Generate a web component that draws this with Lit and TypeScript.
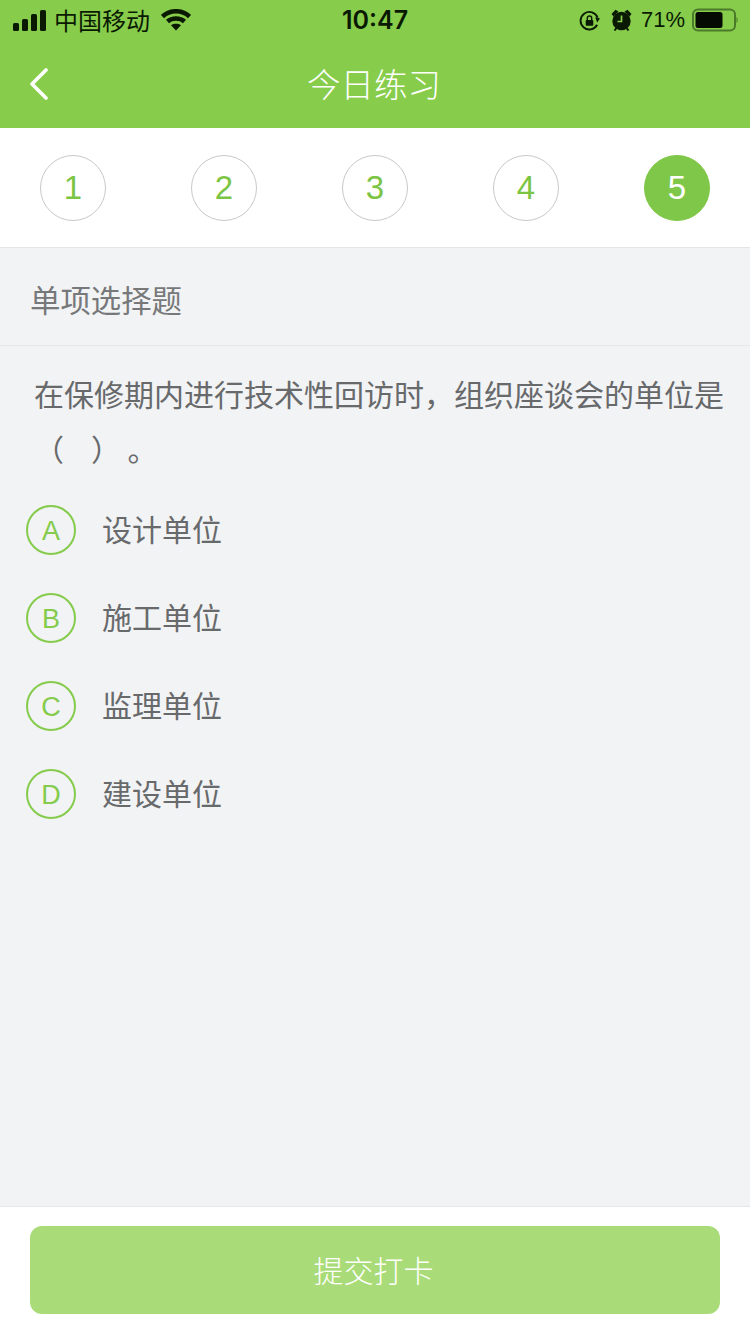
import { LitElement, html, css } from "lit";
import { customElement } from "lit/decorators.js";

@customElement("app-root")
export class AppRoot extends LitElement {
  static styles = css`
    :host {
      display: flex;
      flex-direction: column;
      width: 750px;
      height: 1334px;
      background: #f2f3f5;
      font-family: "Noto Sans CJK SC", "Liberation Sans", sans-serif;
      overflow: hidden;
    }
    .top { background: #87cd4b; height: 128px; display: flex; flex-direction: column; flex: none; }
    .status { height: 40px; display: flex; align-items: center; justify-content: space-between; padding: 0 12px 0 13px; color: #0a1a02; font-family: "Liberation Sans", "Noto Sans CJK SC", sans-serif; position: relative; }
    .left, .right { display: flex; align-items: center; }
    .left { gap: 8px; }
    .carrier { font-family: "Noto Sans CJK SC", sans-serif; font-size: 24px; line-height: 40px; margin-left: -1px; }
    .time { position: absolute; left: 0; right: 0; text-align: center; font-size: 25px; line-height: 40px; font-family: "Inter", "Liberation Sans", sans-serif; font-weight: 600; }
    .pct { font-size: 22px; margin: 0 7px 0 9px; line-height: 40px; }
    .nav { flex: 1; display: flex; align-items: center; justify-content: center; position: relative; color: #fff; font-size: 33.5px; font-weight: 300; padding: 0 2px 4px 0; }
    .back { position: absolute; left: 29px; top: 28px; }
    .steps { background: #fff; height: 119px; border-bottom: 1px solid #e4e5e7; display: flex; align-items: center; justify-content: space-between; padding: 0 40px; flex: none; }
    .step { box-sizing: border-box; width: 66px; height: 66px; border-radius: 50%; border: 1px solid #c9c9c9; color: #7cc544; font-size: 33px; display: flex; align-items: center; justify-content: center; font-family: "Liberation Sans", sans-serif; }
    .step.on { background: #7fc748; border-color: #7fc748; color: #fff; }
    .type { height: 98px; box-sizing: border-box; border-bottom: 1px solid #e6e7e9; padding: 4px 0 0 30px; display: flex; align-items: center; font-size: 30.4px; color: #77787a; flex: none; }
    .main { flex: 1; }
    .q { margin: 0; padding: 20px 20px 0 34px; font-size: 30px; line-height: 55px; color: #67696b; white-space: nowrap; }
    .opts { display: flex; flex-direction: column; padding: 29px 0 0 26px; gap: 38px; }
    .opt { display: flex; align-items: center; gap: 26px; height: 50px; font-size: 30px; color: #67696b; }
    .opt-text { padding-bottom: 5px; }
    .mark { box-sizing: border-box; width: 50px; height: 50px; border-radius: 50%; border: 2px solid #85cb4c; color: #85cb4c; display: flex; align-items: center; justify-content: center; font-size: 27px; padding-top: 2px; font-family: "Liberation Sans", sans-serif; flex: none; }
    .foot { flex: none; height: 128px; box-sizing: border-box; background: #fff; border-top: 1px solid #e6e7e9; padding: 19px 30px 0; }
    .btn { height: 88px; border-radius: 12px; background: #a9dc78; color: #fff; font-size: 30px; font-weight: 300; display: flex; align-items: center; justify-content: center; padding: 0 3px 2px 0; box-sizing: border-box; }
  `;

  render() {
    const steps = [1, 2, 3, 4, 5];
    const opts: [string, string][] = [
      ["A", "设计单位"],
      ["B", "施工单位"],
      ["C", "监理单位"],
      ["D", "建设单位"],
    ];
    return html`
      <div class="top">
        <div class="status">
          <div class="left">
            <svg width="34" height="21" viewBox="0 0 34 21" fill="#0a1a02">
              <rect x="0" y="13" width="6" height="8" rx="1.5"/>
              <rect x="9" y="9" width="6" height="12" rx="1.5"/>
              <rect x="18" y="4" width="6" height="17" rx="1.5"/>
              <rect x="27" y="0" width="6" height="21" rx="1.5"/>
            </svg>
            <span class="carrier">中国移动</span>
            <svg width="30" height="22" viewBox="0 0 30 22" fill="none" stroke="#0a1a02" stroke-width="4.6" style="margin-left:3px">
              <path d="M1.5 7.5 C9 0.5 21 0.5 28.5 7.5"/>
              <path d="M6.5 12.5 C11 8.5 19 8.5 23.5 12.5"/>
              <path d="M15 21.5 L10 16.2 C13 14.3 17 14.3 20 16.2 Z" fill="#0a1a02" stroke="none"/>
            </svg>
          </div>
          <div class="time">10:47</div>
          <div class="right">
            <svg width="21" height="22" viewBox="0 0 22 22" fill="none" stroke="#0a1a02" stroke-width="2" style="margin-right:11px;margin-top:2px">
              <path d="M19 15 A9.2 9.2 0 1 1 19.5 7.5"/>
              <path d="M17 7 L22 8.5 L19 12.5 Z" fill="#0a1a02" stroke="none"/>
              <rect x="7" y="10" width="8" height="6" rx="1" fill="#0a1a02" stroke="none"/>
              <path d="M8.7 10 V8 a2.3 2.3 0 0 1 4.6 0 V10" stroke-width="1.5"/>
            </svg>
            <svg width="21" height="22" viewBox="0 0 21 22" style="margin-top:-1px">
              <circle cx="10.5" cy="12" r="9.2" fill="#0a1a02"/>
              <path d="M0.5 5 L4.5 0.8 L7.5 2.5 L2.5 7.5 Z M20.5 5 L16.5 0.8 L13.5 2.5 L18.500 7.5 Z" fill="#0a1a02"/>
              <path d="M10.5 6.5 V12.5 H6.5" fill="none" stroke="#87cd4b" stroke-width="1.7"/>
              <path d="M3.5 21.5 l2 -2.5 M17.5 21.5 l-2 -2.5" stroke="#0a1a02" stroke-width="2"/>
            </svg>
            <span class="pct">71%</span>
            <svg width="46" height="24" viewBox="0 0 46 24">
              <rect x="1" y="1.5" width="42" height="21" rx="5" fill="none" stroke="#4b7a2a" stroke-width="2"/>
              <rect x="3.5" y="4" width="27" height="16" rx="2.5" fill="#050a02"/>
              <path d="M44.5 9 C46 10 46 14 44.5 15 Z" fill="#4b7a2a"/>
            </svg>
          </div>
        </div>
        <div class="nav">
          <svg class="back" width="20" height="32" viewBox="0 0 20 32" fill="none" stroke="#fff" stroke-width="3.6" stroke-linecap="round" stroke-linejoin="round">
            <path d="M17 2 L3 16 L17 30"/>
          </svg>
          今日练习
        </div>
      </div>
      <div class="steps">
        ${steps.map((s) => html`<div class="step ${s === 5 ? "on" : ""}">${s}</div>`)}
      </div>
      <div class="type">单项选择题</div>
      <div class="main">
        <p class="q">在保修期内进行技术性回访时，组织座谈会的单位是<br />（&nbsp;&nbsp;&nbsp;&nbsp;）&nbsp;。</p>
        <div class="opts">
          ${opts.map(([k, t]) => html`<div class="opt"><span class="mark">${k}</span><span class="opt-text">${t}</span></div>`)}
        </div>
      </div>
      <div class="foot"><div class="btn">提交打卡</div></div>
    `;
  }
}
